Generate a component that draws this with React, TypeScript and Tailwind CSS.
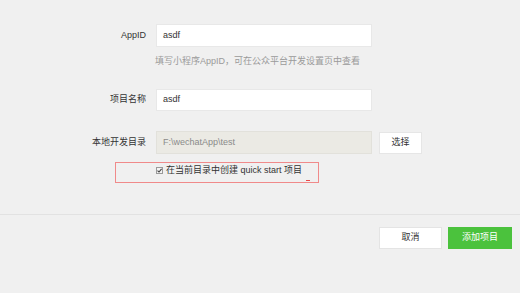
import { useState } from "react";

// New project form: app id, project name, directory and the quick start option
const App = () => {
  const [quickStart, setQuickStart] = useState(true);

  return (
    <div className="w-[520px] h-[293px] bg-[#f0f0f0] flex flex-col text-[9px] text-[#333] font-['Liberation_Sans','Noto_Sans_CJK_SC',sans-serif]">
      <div className="pt-[24px]">
        <div className="flex items-center">
          <label className="w-[146px] text-right">AppID</label>
          <div className="ml-[10px] w-[216px] h-[23px] bg-white border border-[#e8e8e8] flex items-center pl-[6px]">asdf</div>
        </div>
        <div className="ml-[155px] mt-[8px] leading-[12px] text-[#9a9a9a]">
          填写小程序AppID，可在公众平台开发设置页中查看
        </div>

        <div className="flex items-center mt-[22px]">
          <label className="w-[146px] text-right">项目名称</label>
          <div className="ml-[10px] w-[216px] h-[22px] bg-white border border-[#e8e8e8] flex items-center pl-[6px]">asdf</div>
        </div>

        <div className="flex items-center mt-[20px]">
          <label className="w-[146px] text-right">本地开发目录</label>
          <div className="ml-[10px] w-[216px] h-[23px] bg-[#ebeae4] border border-[#e2e1db] flex items-center pl-[6px] text-[#8a8a8a]">
            F:\wechatApp\test
          </div>
          <button className="ml-[7px] w-[43px] h-[22px] bg-white border border-[#e6e6e6] text-[#333]">选择</button>
        </div>

        <div className="relative ml-[115px] mt-[8px] w-[204px] h-[21px] border border-[#f08a8a] flex items-start pl-[40px] pt-[1px]">
          <button
            onClick={() => setQuickStart(!quickStart)}
            className="flex items-center gap-[3px] leading-[12px]"
          >
            <svg width="7" height="7" viewBox="0 0 7 7">
              <rect x="0.5" y="0.5" width="6" height="6" fill="#f4f4f4" stroke="#9a9a9a" />
              {quickStart && <path d="M1.5 3.6 L3 5 L5.6 1.8" fill="none" stroke="#444" strokeWidth="1.1" />}
            </svg>
            <span>在当前目录中创建 quick start 项目</span>
          </button>
          <span className="absolute right-[8px] bottom-[1px] w-[4px] h-[1px] bg-[#e84a4a]" />
        </div>
      </div>

      <div className="mt-[31px] h-px bg-[#e2e2e2]" />

      <div className="flex justify-end gap-[6px] pr-[8px] mt-[12px]">
        <button className="w-[63px] h-[22px] bg-white border border-[#e4e4e4] text-[#333]">取消</button>
        <button className="w-[64px] h-[22px] bg-[#4bc23d] text-white">添加项目</button>
      </div>
    </div>
  );
};

export default App;
